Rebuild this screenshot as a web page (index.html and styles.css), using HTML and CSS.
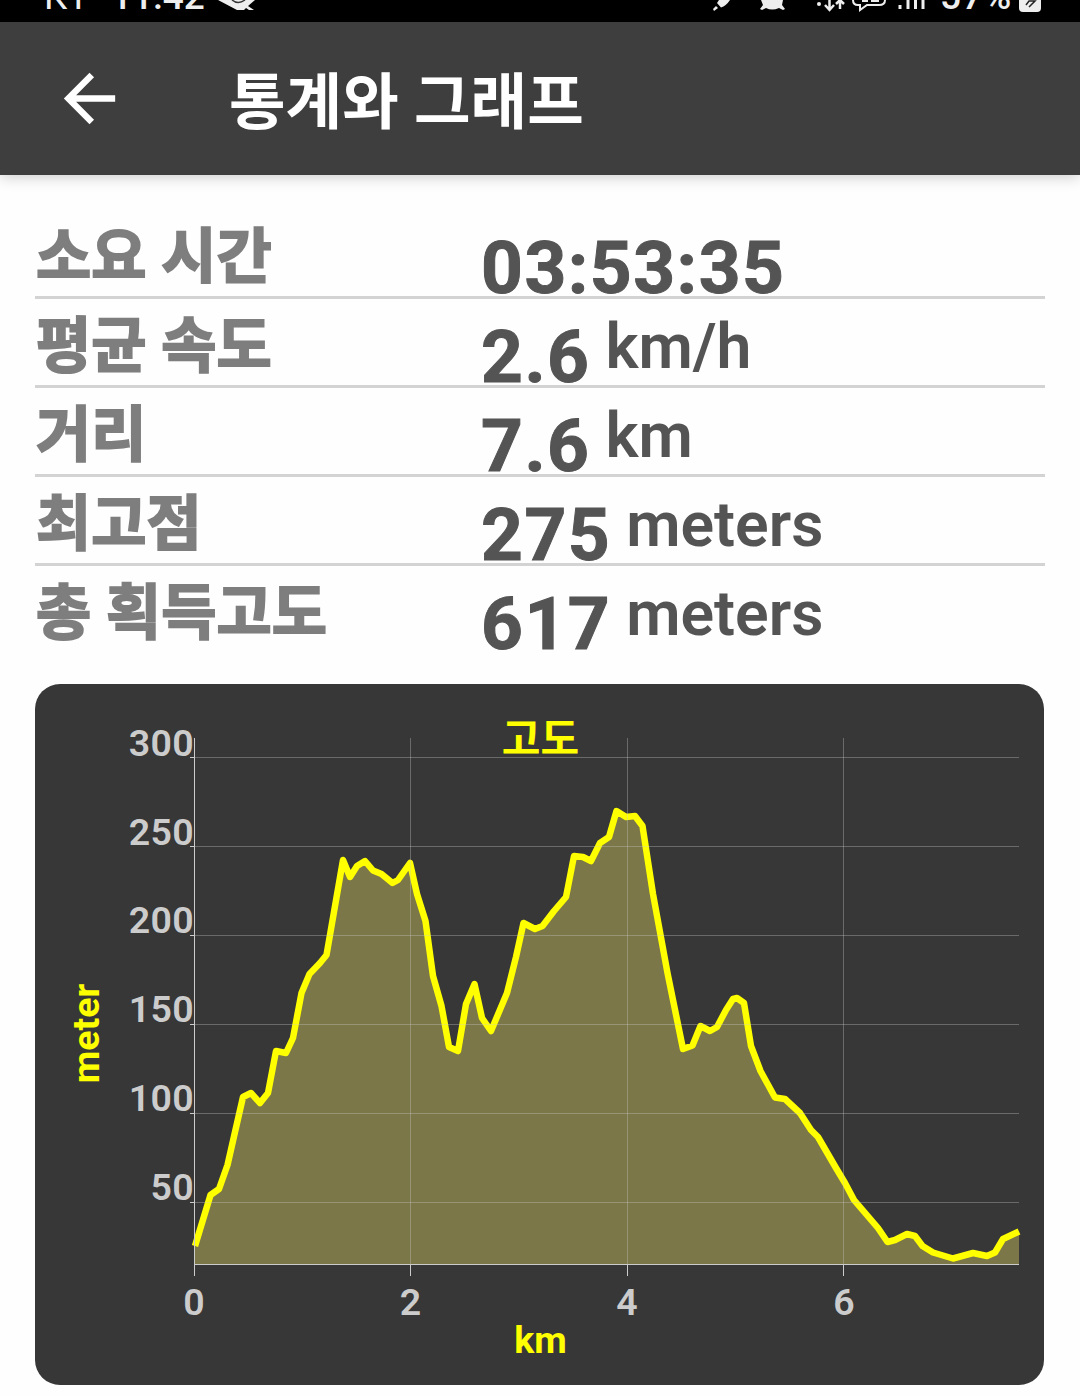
FILE: index.html
```html
<!DOCTYPE html>
<html lang="ko">
<head>
    <meta charset="UTF-8">
    <meta name="viewport" content="width=device-width, initial-scale=1.0">
    <title>통계와 그래프</title>
    <link rel="stylesheet" href="styles.css">
</head>
<body>
    <div class="status-bar">
        <div class="status-left">
            <span class="carrier">KT</span>
            <span class="clock">11:42</span>
            <svg class="status-logo" width="40" height="22" viewBox="0 0 40 22">
                <path d="M0 0h37l-7 6 6 4h-5l-3-2-2 2h-7z" fill="#eee"/>
                <path d="M14 0q6 5 13 0" fill="none" stroke="#333" stroke-width="1.5"/>
            </svg>
        </div>
        <svg class="status-icons" width="220" height="22" viewBox="710 0 220 22">
            <path d="M717 3l2-3h11q-4 6-9 7.500zM716 6l2 2-4 3-1-2z" fill="#eee"/>
            <path d="M761 0h22l-1 5 3 4-2 1-4-2q-7 3-13 0l-4 2-2-1 3-4z" fill="#eee"/>
            <circle cx="819" cy="4" r="2" fill="#eee"/>
            <path d="M829.500 0v10M825 5l4.500 5 4.500-5M840 9V0M836 4l4-4 4 4" fill="none" stroke="#eee" stroke-width="2.500"/>
            <path d="M853 0q0 5 5 5h2v5l7-5h12q6 0 6-5" fill="none" stroke="#eee" stroke-width="2"/>
            <path d="M862 1h6M871 1h8" stroke="#eee" stroke-width="2"/>
            <path d="M900 5v4M908 0v9M915.500 0v9M923 0v9" stroke="#eee" stroke-width="3"/>
        </svg>
        <div class="battery">57%</div>
        <svg class="battery-icon" width="22" height="12" viewBox="0 0 22 12">
            <path d="M0 0h22v8q0 4-4 4H4q-4 0-4-4z" fill="#eee"/>
            <path d="M7 5l3-4h6l-6 6" fill="none" stroke="#222" stroke-width="1.500"/>
        </svg>
    </div>

    <header class="app-bar">
        <svg class="back" width="77" height="77" viewBox="0 0 24 24">
            <path d="M20 11H7.830l5.590-5.590L12 4l-8 8 8 8 1.410-1.410L7.830 13H20v-2z" fill="#fff"/>
        </svg>
        <h1>통계와 그래프</h1>
    </header>

    <main>
        <ul class="stats">
            <li><span class="label">소요 시간</span><span class="value">03:53:35</span></li>
            <li><span class="label">평균 속도</span><span class="value">2.6</span><span class="unit">km/h</span></li>
            <li><span class="label">거리</span><span class="value">7.6</span><span class="unit">km</span></li>
            <li><span class="label">최고점</span><span class="value">275</span><span class="unit">meters</span></li>
            <li><span class="label">총 획득고도</span><span class="value">617</span><span class="unit">meters</span></li>
        </ul>

        <div class="chart-card">
            <svg class="chart" width="1009" height="701" viewBox="35 684 1009 701">
                <!-- elevation profile -->
                <path class="area" d="M194 1264V1246L210.500 1195 219 1189 227.500 1165 235 1132 243 1097 251 1093 260 1103 268 1093 276 1051 286 1053 293 1038 301.500 993 309.500 974 320 963 326.500 955 343 860 350 877 357 866 365 861 373 870.500 381.500 874 392.500 883 398 880 410 863 417 894 425.500 921 433 976 441.500 1006 449 1047 458 1051 466 1004 474.500 984 482 1018 491 1031 507 993 516 957 523.500 923 535 929 542.500 926 554 911 566 897 574 856 583 857 591 861 600 843 609 837 616.500 811 626 817 635 816 642.500 826 653 894 667.500 973 683 1049 692.500 1045.500 700.500 1026 710 1031 717 1027 726 1010 733 999 737 998 744 1003 751 1046 760.500 1071 775 1097.500 785 1099 800 1113 811 1130 818 1137 836 1168 845 1183 854 1200 878 1228 887.500 1242 895 1240 907 1234 915 1236 922.500 1246 933 1252.500 953 1258.500 973 1253 987 1256 995 1252.500 1003 1239 1019 1231.500V1264Z"/>
                <polyline class="line" points="195,1246 210.500,1195 219,1189 227.500,1165 235,1132 243,1097 251,1093 260,1103 268,1093 276,1051 286,1053 293,1038 301.500,993 309.500,974 320,963 326.500,955 343,860 350,877 357,866 365,861 373,870.500 381.500,874 392.500,883 398,880 410,863 417,894 425.500,921 433,976 441.500,1006 449,1047 458,1051 466,1004 474.500,984 482,1018 491,1031 507,993 516,957 523.500,923 535,929 542.500,926 554,911 566,897 574,856 583,857 591,861 600,843 609,837 616.500,811 626,817 635,816 642.500,826 653,894 667.500,973 683,1049 692.500,1045.500 700.500,1026 710,1031 717,1027 726,1010 733,999 737,998 744,1003 751,1046 760.500,1071 775,1097.500 785,1099 800,1113 811,1130 818,1137 836,1168 845,1183 854,1200 878,1228 887.500,1242 895,1240 907,1234 915,1236 922.500,1246 933,1252.500 953,1258.500 973,1253 987,1256 995,1252.500 1003,1239 1019,1231.500"/>

                <!-- grid and axes -->
                <path class="grid" d="M194 757.500H1019M194 846.500H1019M194 935.500H1019M194 1024.500H1019M194 1113.500H1019M194 1202.500H1019M410.500 738V1264M627.500 738V1264M843.500 738V1264"/>
                <path class="axis" d="M194.500 738V1276M194 1264.500H1019M410.500 1264V1276M627.500 1264V1276M843.500 1264V1276M190 757.500h4M190 846.500h4M190 935.500h4M190 1024.500h4M190 1113.500h4M190 1202.500h4"/>

                <g class="tick-label y-ticks">
                    <text x="194" y="755.500">300</text>
                    <text x="194" y="844.500">250</text>
                    <text x="194" y="932.500">200</text>
                    <text x="194" y="1021.500">150</text>
                    <text x="194" y="1110.500">100</text>
                    <text x="194" y="1199.500">50</text>
                </g>
                <g class="tick-label x-ticks">
                    <text x="194" y="1314.500">0</text>
                    <text x="410.500" y="1314.500">2</text>
                    <text x="627" y="1314.500">4</text>
                    <text x="844" y="1314.500">6</text>
                </g>

                <text class="chart-title" x="540.500" y="754">고도</text>
                <text class="axis-title" x="540.500" y="1353">km</text>
                <text class="axis-title" transform="translate(98.500 1033.500) rotate(-90)">meter</text>
            </svg>
        </div>
    </main>
</body>
</html>
```

FILE: styles.css
```css
* {
    box-sizing: border-box;
}

body {
    margin: 0;
    background-color: #fefefe;
    font-family: Roboto, "Noto Sans CJK KR", sans-serif;
    overflow: hidden;
}

.status-bar {
    display: flex;
    align-items: flex-start;
    height: 22px;
    overflow: hidden;
    background-color: #000;
    color: #eee;
    font-size: 37px;
    line-height: 35px;
}

.status-left {
    display: flex;
    width: 710px;
    padding-left: 44px;
}

.carrier,
.clock,
.battery {
    margin-top: -21px;
}

.carrier {
    width: 67px;
}

.clock {
    width: 107px;
    font-weight: 500;
}

.battery {
    width: 89px;
    padding-left: 10px;
    font-weight: 500;
    letter-spacing: 1px;
}

.app-bar {
    display: flex;
    align-items: center;
    height: 153px;
    padding-left: 51px;
    background-color: #3e3e3e;
    box-shadow: 0 2px 14px rgba(0, 0, 0, 0.2);
}

.app-bar h1 {
    margin: 8px 0 0 101px;
    color: #fff;
    font-size: 61.500px;
    font-weight: 700;
    line-height: 80px;
}

main {
    padding: 35px 35px 0;
}

.stats {
    margin: 0;
    padding: 0;
    list-style: none;
}

.stats li {
    display: flex;
    align-items: flex-start;
    height: 89px;
    border-bottom: 3px solid #d3d3d3;
    white-space: nowrap;
}

.stats li:last-child {
    border-bottom: none;
}

.label {
    width: 446px;
    padding-left: 1px;
    color: #7e7e7e;
    font-size: 60px;
    font-weight: 700;
    line-height: 96px;
    -webkit-text-stroke: 2px #7e7e7e;
}

.value {
    margin-top: 21px;
    color: #545454;
    font-size: 73px;
    font-weight: 700;
    line-height: 74px;
    letter-spacing: 1.500px;
    -webkit-text-stroke: 1px #545454;
}

.unit {
    margin: 11px 0 0 15px;
    color: #545454;
    font-size: 62.500px;
    font-weight: 600;
    line-height: 74px;
}

.chart-card {
    width: 1009px;
    height: 701px;
    margin-top: 29px;
    border-radius: 25px;
    background-color: #373737;
    overflow: hidden;
}

.chart {
    display: block;
}

.area {
    fill: #7b7748;
}

.line {
    fill: none;
    stroke: #ff0;
    stroke-width: 6.500;
    stroke-linejoin: round;
}

.grid,
.axis {
    fill: none;
    stroke: #ccc;
    stroke-width: 1;
}

.grid {
    stroke-opacity: 0.350;
}

.tick-label {
    fill: #ccc;
    font-size: 37.500px;
    font-weight: 600;
    letter-spacing: 0.300px;
}

.y-ticks {
    text-anchor: end;
}

.x-ticks,
.chart-title,
.axis-title {
    text-anchor: middle;
}

.chart-title,
.axis-title {
    fill: #ff0;
    font-weight: 700;
}

.chart-title {
    font-size: 42px;
}

.axis-title {
    font-size: 37.500px;
}
```
